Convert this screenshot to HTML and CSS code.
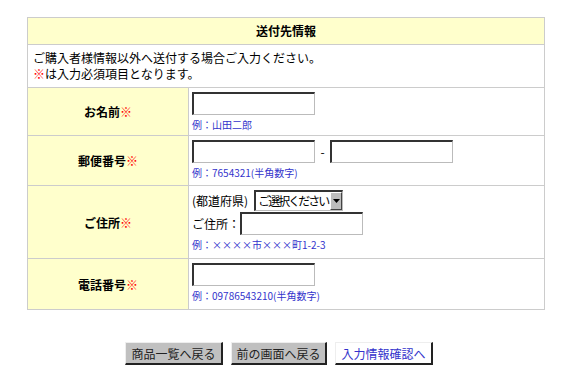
FILE: index.html
```html
<!DOCTYPE html>
<html lang="ja">
<head>
    <meta charset="UTF-8">
    <meta name="viewport" content="width=device-width, initial-scale=1.0">
    <title>送付先情報</title>
    <link rel="stylesheet" href="styles.css">
</head>
<body>
    <!-- 送付先フォーム -->
    <table class="form-table">
        <tr>
            <th colspan="2" class="head">送付先情報</th>
        </tr>
        <tr>
            <td colspan="2" class="desc">
                ご購入者様情報以外へ送付する場合ご入力ください。<br>
                <span class="req">※</span>は入力必須項目となります。
            </td>
        </tr>
        <tr class="row-name">
            <th class="label">お名前<span class="req">※</span></th>
            <td class="field">
                <input type="text" class="txt">
                <div class="hint">例：山田二郎</div>
            </td>
        </tr>
        <tr class="row-zip">
            <th class="label">郵便番号<span class="req">※</span></th>
            <td class="field">
                <input type="text" class="txt"><span class="dash">-</span><input type="text" class="txt">
                <div class="hint">例：7654321(半角数字)</div>
            </td>
        </tr>
        <tr class="row-addr">
            <th class="label">ご住所<span class="req">※</span></th>
            <td class="field">
                <div class="line">
                    (都道府県)
                    <span class="select-box">
                        <span class="select-text">ご選択ください</span>
                        <span class="select-arrow">
                            <svg width="7" height="4" viewBox="0 0 7 4"><polygon points="0,0 7,0 3.5,4" fill="#000"/></svg>
                        </span>
                    </span>
                </div>
                <div class="line">
                    ご住所：<input type="text" class="txt">
                </div>
                <div class="hint">例：××××市×××町1-2-3</div>
            </td>
        </tr>
        <tr class="row-tel">
            <th class="label">電話番号<span class="req">※</span></th>
            <td class="field">
                <input type="text" class="txt">
                <div class="hint">例：09786543210(半角数字)</div>
            </td>
        </tr>
    </table>

    <!-- ボタン -->
    <div class="buttons">
        <button class="btn">商品一覧へ戻る</button>
        <button class="btn">前の画面へ戻る</button>
        <button class="btn btn-next">入力情報確認へ</button>
    </div>
</body>
</html>
```

FILE: styles.css
```css
*{
    margin: 0;
    padding: 0;
    box-sizing: border-box;
}
body{
    font-family: "Noto Sans CJK JP", "Liberation Sans", sans-serif;
    font-size: 12px;
    color: #000;
    background-color: #fff;
    padding: 17px 19px 0 27px;
}
.form-table{
    width: 518px;
    border-collapse: collapse;
}
.form-table th,
.form-table td{
    border: 1px solid #cccccc;
    font-weight: normal;
}
.head{
    background-color: #ffffcc;
    font-weight: bold !important;
    height: 27px;
    line-height: 16px;
}
.desc{
    height: 43px;
    padding: 4px 5px;
    line-height: 16px;
}
.req{
    color: #ff0000;
}
.label{
    width: 161px;
    background-color: #ffffcc;
    font-weight: bold !important;
    text-align: center;
}
.field{
    padding: 4px 4px 3px 3px;
    vertical-align: top;
}
.row-name{
    height: 48px;
}
.row-zip{
    height: 50px;
}
.row-addr{
    height: 73px;
}
.row-addr .field{
    padding-top: 3px;
}
.row-tel{
    height: 51px;
}
.txt{
    width: 123px;
    height: 23px;
    border-top: 2px solid #333;
    border-left: 2px solid #333;
    border-right: 1px solid #bbb;
    border-bottom: 1px solid #bbb;
    vertical-align: middle;
    background: #fff;
}
.dash{
    display: inline-block;
    width: 15px;
    text-align: center;
    vertical-align: middle;
}
.hint{
    font-size: 10px;
    color: #3333cc;
    line-height: 12px;
    margin-top: 4px;
}
.line{
    height: 23px;
    display: flex;
    align-items: center;
    white-space: nowrap;
}
.select-box{
    display: inline-flex;
    align-items: stretch;
    height: 21px;
    margin-left: 6px;
    border-top: 2px solid #333;
    border-left: 2px solid #333;
    border-right: 1px solid #bbb;
    border-bottom: 1px solid #bbb;
    background: #fff;
}
.select-text{
    width: 74px;
    padding-left: 2px;
    line-height: 18px;
    letter-spacing: -2px;
}
.select-arrow{
    width: 12px;
    background: #bdbdbd;
    border-top: 1px solid #fff;
    border-left: 1px solid #fff;
    border-right: 1px solid #444;
    border-bottom: 1px solid #444;
    display: flex;
    align-items: center;
    justify-content: center;
}
.buttons{
    display: flex;
    gap: 8px;
    margin: 32px 0 0 98px;
}
.btn{
    width: 98px;
    height: 23px;
    font-family: inherit;
    font-size: 12px;
    color: #222;
    background-color: #c0c0c0;
    border-top: 1px solid #eee;
    border-left: 1px solid #eee;
    border-right: 2px solid #222;
    border-bottom: 2px solid #222;
}
.btn:nth-child(2){
    width: 96px;
}
.btn-next{
    background-color: #fff;
    color: #3333cc;
}
```
